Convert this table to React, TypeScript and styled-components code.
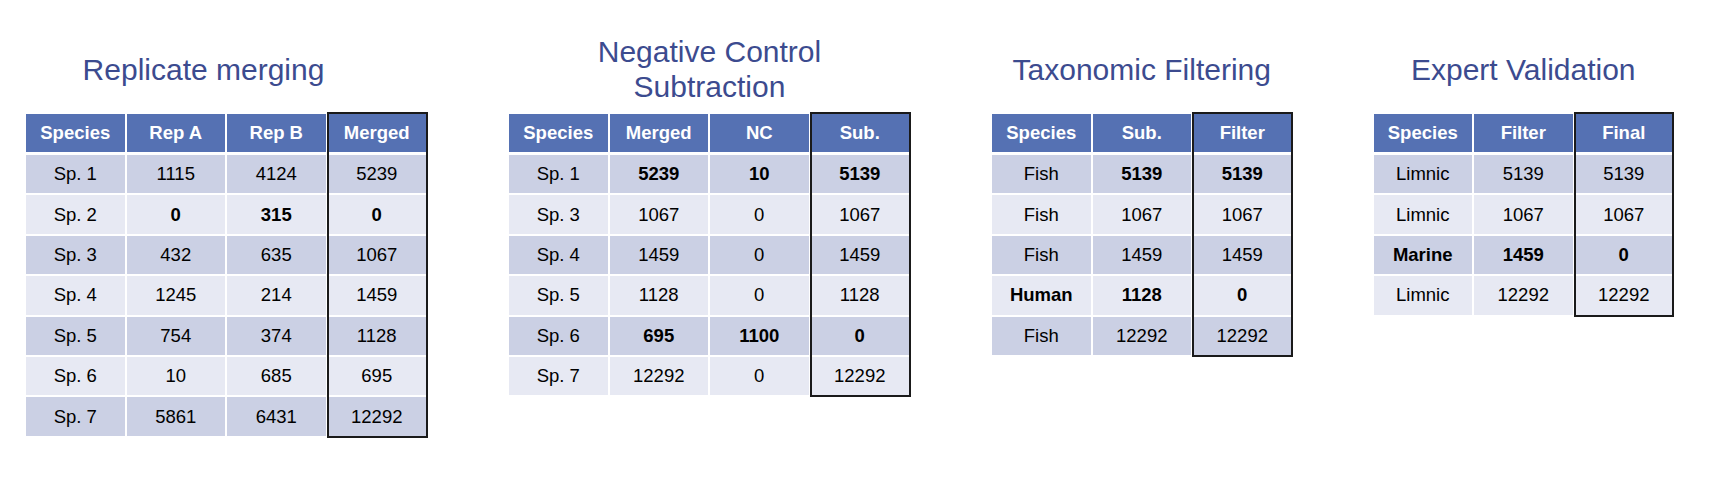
import React from "react";
import styled, { createGlobalStyle } from "styled-components";

const GlobalStyle = createGlobalStyle`
  html, body {
    margin: 0;
    padding: 0;
    background: #ffffff;
  }
  body {
    font-family: "Liberation Sans", Arial, sans-serif;
    width: 1723px;
    height: 477px;
    overflow: hidden;
  }
`;

const Page = styled.div`
  display: flex;
  align-items: flex-start;
  gap: 82px;
  padding-left: 26px;
`;

const Panel = styled.section<{ $w: number }>`
  display: flex;
  flex-direction: column;
  width: ${(p) => p.$w}px;
`;

const Title = styled.h2<{ $shift?: number }>`
  margin: 34px 0 0 0;
  height: 70px;
  display: flex;
  align-items: center;
  justify-content: center;
  text-align: center;
  padding-right: ${(p) => (p.$shift ? p.$shift * 2 : 0)}px;
  font-family: "Liberation Sans", Arial, sans-serif;
  font-weight: 400;
  font-size: 30px;
  line-height: 35px;
  color: #3c4b8f;
`;

const Grid = styled.div<{ $cols: number; $rows: number }>`
  margin-top: 10px;
  display: grid;
  grid-template-columns: repeat(${(p) => p.$cols}, 98.5px);
  grid-template-rows: 39px repeat(${(p) => p.$rows}, 38.4px);
  column-gap: 2px;
  row-gap: 2px;
  position: relative;
`;

const HeadCell = styled.div`
  height: 38px;
  align-self: start;
  background: #5571b3;
  color: #ffffff;
  font-weight: 700;
  font-size: 18.5px;
  display: flex;
  align-items: center;
  justify-content: center;
`;

const Cell = styled.div<{ $dark: boolean; $bold?: boolean }>`
  background: ${(p) => (p.$dark ? "#cbd0e4" : "#e7e9f3")};
  color: #000000;
  font-size: 18.5px;
  font-weight: ${(p) => (p.$bold ? 700 : 400)};
  display: flex;
  align-items: center;
  justify-content: center;
`;

const Highlight = styled.div<{ $col: number }>`
  position: absolute;
  grid-column: ${(p) => p.$col};
  grid-row: 1 / -1;
  top: -2px;
  bottom: -2px;
  left: -1px;
  right: -1px;
  border: 2px solid #1a1a1a;
  pointer-events: none;
  z-index: 1;
`;

type Row = { cells: string[]; bold?: boolean[] };

type TableDef = {
  title: React.ReactNode;
  width: number;
  shift?: number;
  head: string[];
  rows: Row[];
};

const tables: TableDef[] = [
  {
    title: "Replicate merging",
    width: 401,
    shift: 23,
    head: ["Species", "Rep A", "Rep B", "Merged"],
    rows: [
      { cells: ["Sp. 1", "1115", "4124", "5239"] },
      { cells: ["Sp. 2", "0", "315", "0"], bold: [false, true, true, true] },
      { cells: ["Sp. 3", "432", "635", "1067"] },
      { cells: ["Sp. 4", "1245", "214", "1459"] },
      { cells: ["Sp. 5", "754", "374", "1128"] },
      { cells: ["Sp. 6", "10", "685", "695"] },
      { cells: ["Sp. 7", "5861", "6431", "12292"] },
    ],
  },
  {
    title: (
      <>
        Negative Control
        <br />
        Subtraction
      </>
    ),
    width: 401,
    head: ["Species", "Merged", "NC", "Sub."],
    rows: [
      { cells: ["Sp. 1", "5239", "10", "5139"], bold: [false, true, true, true] },
      { cells: ["Sp. 3", "1067", "0", "1067"] },
      { cells: ["Sp. 4", "1459", "0", "1459"] },
      { cells: ["Sp. 5", "1128", "0", "1128"] },
      { cells: ["Sp. 6", "695", "1100", "0"], bold: [false, true, true, true] },
      { cells: ["Sp. 7", "12292", "0", "12292"] },
    ],
  },
  {
    title: "Taxonomic Filtering",
    width: 299.5,
    head: ["Species", "Sub.", "Filter"],
    rows: [
      { cells: ["Fish", "5139", "5139"], bold: [false, true, true] },
      { cells: ["Fish", "1067", "1067"] },
      { cells: ["Fish", "1459", "1459"] },
      { cells: ["Human", "1128", "0"], bold: [true, true, true] },
      { cells: ["Fish", "12292", "12292"] },
    ],
  },
  {
    title: "Expert Validation",
    width: 299.5,
    head: ["Species", "Filter", "Final"],
    rows: [
      { cells: ["Limnic", "5139", "5139"] },
      { cells: ["Limnic", "1067", "1067"] },
      { cells: ["Marine", "1459", "0"], bold: [true, true, true] },
      { cells: ["Limnic", "12292", "12292"] },
    ],
  },
];

function DataTable({ t }: { t: TableDef }) {
  const cols = t.head.length;
  return (
    <Panel $w={t.width}>
      <Title $shift={t.shift}>
        <span>{t.title}</span>
      </Title>
      <Grid $cols={cols} $rows={t.rows.length}>
        {t.head.map((h) => (
          <HeadCell key={h}>{h}</HeadCell>
        ))}
        {t.rows.map((r, ri) =>
          r.cells.map((c, ci) => (
            <Cell
              key={`${ri}-${ci}`}
              $dark={ri % 2 === 0}
              $bold={r.bold ? r.bold[ci] : false}
            >
              {c}
            </Cell>
          ))
        )}
        <Highlight $col={cols} />
      </Grid>
    </Panel>
  );
}

export default function App() {
  return (
    <>
      <GlobalStyle />
      <Page>
        {tables.map((t, i) => (
          <DataTable key={i} t={t} />
        ))}
      </Page>
    </>
  );
}
